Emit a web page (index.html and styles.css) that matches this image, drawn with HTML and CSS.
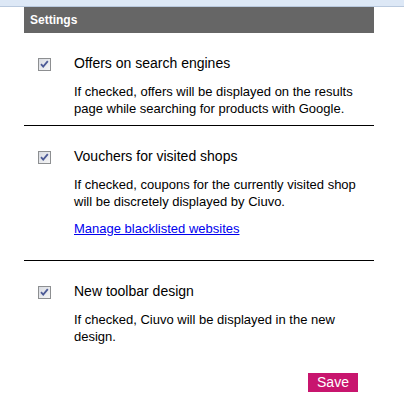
FILE: index.html
```html
<!DOCTYPE html>
<html lang="en">
<head>
<meta charset="utf-8">
<title>Settings</title>
<link rel="stylesheet" href="styles.css">
</head>
<body>
<div class="topbar"></div>
<div class="panel">
  <div class="panel-header">Settings</div>

  <div class="option">
    <svg class="checkbox" width="13" height="13" viewBox="0 0 13 13" aria-hidden="true">
      <defs>
        <linearGradient id="cbg" x1="0" y1="0" x2="1" y2="1">
          <stop offset="0" stop-color="#d8dbe2"/>
          <stop offset="1" stop-color="#f6f6f6"/>
        </linearGradient>
      </defs>
      <rect x="0.5" y="0.5" width="12" height="12" fill="url(#cbg)" stroke="#8d8f91"/>
      <path d="M3 6.2 L5.2 8.6 L9.8 3.2" fill="none" stroke="#4c5a96" stroke-width="1.8"/>
    </svg>
    <div class="option-body">
      <div class="option-label">Offers on search engines</div>
      <p class="option-desc">If checked, offers will be displayed on the results page while searching for products with Google.</p>
    </div>
  </div>
  <hr class="sep">

  <div class="option">
    <svg class="checkbox" width="13" height="13" viewBox="0 0 13 13" aria-hidden="true">
      <rect x="0.5" y="0.5" width="12" height="12" fill="url(#cbg)" stroke="#8d8f91"/>
      <path d="M3 6.2 L5.2 8.6 L9.8 3.2" fill="none" stroke="#4c5a96" stroke-width="1.8"/>
    </svg>
    <div class="option-body">
      <div class="option-label">Vouchers for visited shops</div>
      <p class="option-desc">If checked, coupons for the currently visited shop will be discretely displayed by Ciuvo.</p>
      <a class="option-link" href="#">Manage blacklisted websites</a>
    </div>
  </div>
  <hr class="sep">

  <div class="option">
    <svg class="checkbox" width="13" height="13" viewBox="0 0 13 13" aria-hidden="true">
      <rect x="0.5" y="0.5" width="12" height="12" fill="url(#cbg)" stroke="#8d8f91"/>
      <path d="M3 6.2 L5.2 8.6 L9.8 3.2" fill="none" stroke="#4c5a96" stroke-width="1.8"/>
    </svg>
    <div class="option-body">
      <div class="option-label">New toolbar design</div>
      <p class="option-desc">If checked, Ciuvo will be displayed in the new design.</p>
    </div>
  </div>

  <div class="actions">
    <button class="save-btn" type="button">Save</button>
  </div>
</div>
</body>
</html>
```
FILE: styles.css
```css
html, body {
  margin: 0;
  padding: 0;
  background: #ffffff;
}
body {
  font-family: "Liberation Sans", Arial, sans-serif;
  color: #000;
}
.topbar {
  height: 6px;
  background: #dde8f6;
  border-bottom: 1px solid #b9c9de;
}
.panel {
  margin-left: 24px;
  width: 350px;
}
.panel-header {
  height: 26px;
  line-height: 26px;
  background: #666666;
  color: #ffffff;
  font-weight: bold;
  font-size: 12px;
  padding-left: 6px;
}
.option {
  display: flex;
  align-items: flex-start;
  padding: 22px 6px 8px 14px;
}
.checkbox {
  flex: none;
  margin-top: 3px;
  margin-right: 23px;
  display: block;
}
.option-body {
  flex: 1;
  min-width: 0;
}
.option-label {
  font-size: 14px;
  line-height: 17px;
}
.option-desc {
  margin: 11px 0 0;
  font-size: 13px;
  line-height: 17px;
}
.option-link {
  display: inline-block;
  margin-top: 10px;
  margin-bottom: 15px;
  font-size: 13px;
  line-height: 17px;
  color: #0000ee;
  text-decoration: underline;
}
.sep {
  border: 0;
  height: 1px;
  background: #000;
  margin: 0;
}
.actions {
  display: flex;
  justify-content: flex-end;
  padding: 20px 16px 0 0;
}
.save-btn {
  width: 50px;
  height: 19px;
  padding: 0;
  border: 0;
  background: #c8156e;
  color: #ffffff;
  font-family: "Liberation Sans", Arial, sans-serif;
  font-size: 14px;
  line-height: 19px;
  cursor: pointer;
}
```
